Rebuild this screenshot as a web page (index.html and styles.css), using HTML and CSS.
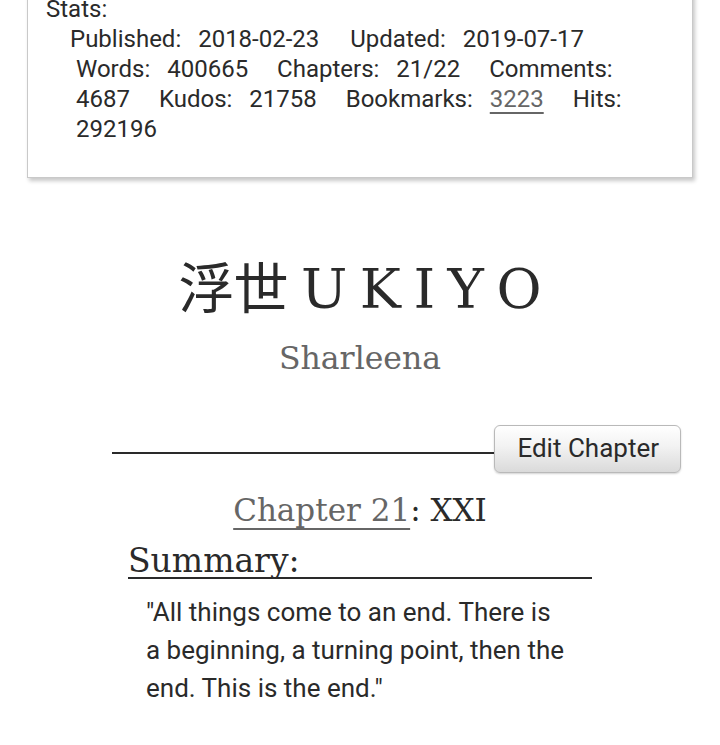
FILE: index.html
```html
<!DOCTYPE html>
<html lang="en">
<head>
<meta charset="utf-8">
<title>浮世 UKIYO - Chapter 21</title>
<link rel="stylesheet" href="styles.css">
</head>
<body>
<div class="meta">
  <dl class="meta-list">
    <dt class="stats-label">Stats:</dt>
    <dd class="stats-body">
      <dl class="stats"><dt>Published:</dt> <dd>2018-02-23</dd> <dt>Updated:</dt> <dd>2019-07-17</dd> <dt>Words:</dt> <dd>400665</dd> <dt>Chapters:</dt> <dd>21/22</dd> <dt>Comments:</dt> <dd>4687</dd> <dt>Kudos:</dt> <dd>21758</dd> <dt>Bookmarks:</dt> <dd><a class="stat-link" href="#">3223</a></dd> <dt>Hits:</dt> <dd>292196</dd></dl>
    </dd>
  </dl>
</div>

<div class="preface">
  <h2 class="work-title">浮世 U K I Y O</h2>
  <h3 class="byline">Sharleena</h3>
</div>

<div class="chapter-nav">
  <div class="nav-rule"></div>
  <a class="button" href="#">Edit Chapter</a>
</div>

<h3 class="chapter-title"><a class="chapter-link" href="#">Chapter 21</a>: XXI</h3>

<div class="summary">
  <h3 class="summary-heading">Summary:</h3>
  <blockquote class="summary-text">"All things come to an end. There is a beginning, a turning point, then the end. This is the end."</blockquote>
</div>
</body>
</html>
```

FILE: styles.css
```css
html, body {
  margin: 0;
  padding: 0;
  background: #ffffff;
}

body {
  color: #2a2a2a;
  font-family: Roboto, "Noto Sans", sans-serif;
  width: 720px;
  overflow: hidden;
}

.meta {
  box-sizing: border-box;
  width: 666px;
  margin: -7px 0 0 27px;
  padding: 0 18px 33px 18px;
  border: 1px solid #c9c9c9;
  background: #ffffff;
  box-shadow: 2px 3px 4px rgba(0, 0, 0, 0.22);
}

.meta-list {
  margin: 0;
  font-size: 24px;
  line-height: 30px;
}

.stats-label {
  margin: 0;
}

.stats-body {
  margin: 0 0 0 30px;
  text-indent: -6px;
}

.stats {
  margin: 0;
  display: inline;
}

.stats dt,
.stats dd {
  display: inline;
  margin: 0;
}

.stats dt {
  margin-right: 11px;
}

.stats dd {
  margin-right: 23px;
}

.stats dd:nth-of-type(1) {
  margin-right: 25px;
}

.stat-link {
  color: #666666;
  text-decoration: underline;
  text-decoration-thickness: 2px;
  text-underline-offset: 5px;
}

.preface {
  text-align: center;
}

.work-title {
  margin: 78px 0 0 0;
  font-family: "DejaVu Serif", "Noto Sans CJK JP", serif;
  font-weight: normal;
  font-size: 55px;
  line-height: 66px;
  word-spacing: -5px;
  color: #2a2a2a;
}

.byline {
  margin: 17px 0 0 0;
  font-family: "DejaVu Serif", serif;
  font-weight: normal;
  font-size: 31.5px;
  line-height: 38px;
  color: #666666;
}

.chapter-nav {
  display: flex;
  align-items: flex-start;
  width: 569px;
  margin: 48px 0 0 112px;
}

.nav-rule {
  flex: 1;
  height: 27px;
  border-bottom: 2px solid #2a2a2a;
}

.button {
  box-sizing: border-box;
  height: 48px;
  padding: 0 21px 2px 22px;
  display: flex;
  align-items: center;
  font-size: 26px;
  color: #2a2a2a;
  text-decoration: none;
  border: 1px solid #b9b9b9;
  border-radius: 6px;
  background: linear-gradient(#ffffff 0%, #f2f2f2 45%, #dadada 100%);
  box-shadow: 0 1px 2px rgba(0, 0, 0, 0.18);
}

.chapter-title {
  margin: 14px 0 0 0;
  text-align: center;
  font-family: "DejaVu Serif", serif;
  font-weight: normal;
  font-size: 31px;
  line-height: 46px;
  color: #2a2a2a;
}

.chapter-link {
  color: #666666;
  text-decoration: underline;
  text-decoration-thickness: 2px;
  text-underline-offset: 7px;
}

.summary {
  width: 464px;
  margin: 11px 0 0 128px;
}

.summary-heading {
  margin: 0;
  font-family: "DejaVu Serif", serif;
  font-weight: normal;
  font-size: 33px;
  line-height: 33px;
  border-bottom: 2px solid #2a2a2a;
  color: #2a2a2a;
}

.summary-text {
  margin: 14px 0 0 0;
  padding: 0 27px 0 18px;
  font-size: 26px;
  line-height: 38px;
  color: #2a2a2a;
}
```
